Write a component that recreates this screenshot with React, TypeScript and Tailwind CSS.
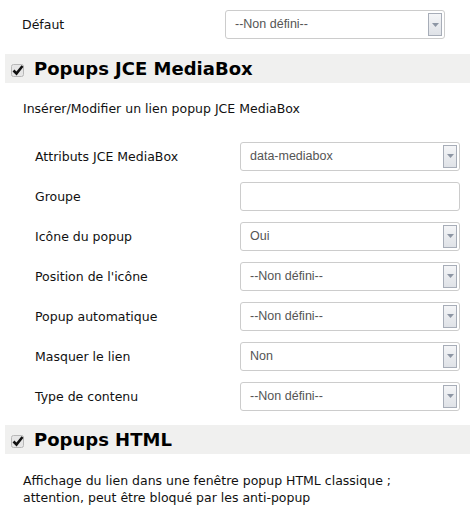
import React from "react";

const labelFont = { fontFamily: '"DejaVu Sans", Verdana, sans-serif' };
const fieldFont = { fontFamily: '"Liberation Sans", Arial, sans-serif' };

function ArrowButton() {
  return (
    <div className="absolute right-[2px] top-[2px] bottom-[2px] w-[14px] border border-[#a7adb8] bg-gradient-to-b from-[#f4f5f7] to-[#dfe2e7] flex items-center justify-center">
      <svg width="7" height="4" viewBox="0 0 7 4">
        <path d="M0 0 L7 0 L3.5 4 Z" fill="#8d96a4" />
      </svg>
    </div>
  );
}

function Select({ value }: { value: string }) {
  return (
    <div
      className="relative h-[29px] w-[220px] rounded-[3px] border border-[#cccccc] bg-white flex items-center pl-[9px] text-[12.5px] text-[#555555]"
      style={fieldFont}
    >
      {value}
      <ArrowButton />
    </div>
  );
}

function TextInput() {
  return <div className="h-[29px] w-[220px] rounded-[3px] border border-[#cccccc] bg-white" />;
}

function CheckMark() {
  return (
    <svg width="16" height="16" viewBox="0 0 16 16">
      <rect x="1.5" y="3.5" width="12" height="12" rx="2" fill="#e6e6e6" stroke="#b8b8b8" />
      <path d="M3.5 9.5 L6.5 12.5 L12.5 5" fill="none" stroke="#111" strokeWidth="2.6" />
    </svg>
  );
}

function SectionHeader({ title }: { title: string }) {
  return (
    <div className="ml-[5px] h-[29px] bg-[#f0f0ef] flex items-center pl-[5px] gap-[8px]">
      <CheckMark />
      <span className="text-[18px] font-bold text-black leading-none" style={labelFont}>
        {title}
      </span>
    </div>
  );
}

function Row({ label, children }: { label: string; children: React.ReactNode }) {
  return (
    <div className="flex items-center h-[40px] pl-[35px]">
      <span className="w-[205px] pt-[2px] text-[12.5px] text-[#111]" style={labelFont}>
        {label}
      </span>
      {children}
    </div>
  );
}

export default function App() {
  return (
    <div className="w-[470px] h-[515px] bg-white overflow-hidden" style={labelFont}>
      <div className="flex items-center h-[50px] pl-[22px]">
        <span className="w-[203px] pt-[1px] text-[12.5px] text-[#111]">Défaut</span>
        <div className="-mt-[1px]">
          <Select value="--Non défini--" />
        </div>
      </div>

      <div className="mt-[4px]">
        <SectionHeader title="Popups JCE MediaBox" />
      </div>

      <p className="pl-[23px] mt-[18px] text-[12.5px] text-[#111] leading-[16px]">
        Insérer/Modifier un lien popup JCE MediaBox
      </p>

      <div className="mt-[19px]">
        <Row label="Attributs JCE MediaBox">
          <Select value="data-mediabox" />
        </Row>
        <Row label="Groupe">
          <TextInput />
        </Row>
        <Row label="Icône du popup">
          <Select value="Oui" />
        </Row>
        <Row label="Position de l'icône">
          <Select value="--Non défini--" />
        </Row>
        <Row label="Popup automatique">
          <Select value="--Non défini--" />
        </Row>
        <Row label="Masquer le lien">
          <Select value="Non" />
        </Row>
        <Row label="Type de contenu">
          <Select value="--Non défini--" />
        </Row>
      </div>

      <div className="mt-[9px]">
        <SectionHeader title="Popups HTML" />
      </div>

      <p className="pl-[23px] mt-[18px] text-[12.5px] text-[#111] leading-[17px]">
        Affichage du lien dans une fenêtre popup HTML classique ;
        <br />
        attention, peut être bloqué par les anti-popup
      </p>
    </div>
  );
}
